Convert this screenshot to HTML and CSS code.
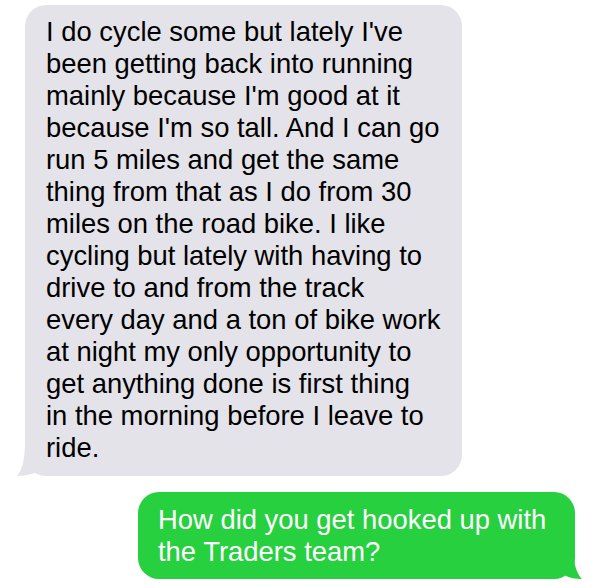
FILE: index.html
```html
<!DOCTYPE html>
<html>
<head>
<meta charset="utf-8">
<link rel="stylesheet" href="styles.css">
</head>
<body>
<div class="thread">
  <div class="bubble them">
    <p class="text">I do cycle some but lately I've
been getting back into running
mainly because I'm good at it
because I'm so tall. And I can go
run 5 miles and get the same
thing from that as I do from 30
miles on the road bike. I like
cycling but lately with having to
drive to and from the track
every day and a ton of bike work
at night my only opportunity to
get anything done is first thing
in the morning before I leave to
ride.</p>
    <svg class="tail tail-left" width="30" height="34" viewBox="0 0 30 34"><path d="M8 0 C8 18 5 28 0 34 C6 34 12 33 18 31 L30 20 L30 0 Z"/></svg>
  </div>
  <div class="bubble me">
    <p class="text">How did you get hooked up with
the Traders team?</p>
    <svg class="tail tail-right" width="30" height="24" viewBox="0 0 30 24"><path d="M22 0 C22 10 25 19 30 24 C24 24 18 23 12 20 L0 14 L0 0 Z"/></svg>
  </div>
</div>
</body>
</html>
```
FILE: styles.css
```css
html, body {
  margin: 0;
  padding: 0;
  background: #ffffff;
}
.thread {
  display: flex;
  flex-direction: column;
  gap: 16px;
  padding-top: 5px;
  font-family: "Liberation Sans", Arial, sans-serif;
}
.bubble {
  position: relative;
  border-radius: 21px;
  box-sizing: border-box;
}
.text {
  margin: 0;
  white-space: pre-line;
  font-size: 27.4px;
  line-height: 32px;
}
.them {
  align-self: flex-start;
  margin-left: 25px;
  width: 437px;
  background: #e4e3e9;
  color: #000;
  padding: 11px 4px 12px 21px;
}
.me {
  align-self: flex-start;
  margin-left: 138px;
  width: 437px;
  background: #27d03f;
  color: #fff;
  padding: 12px 4px 11px 20px;
}
.tail {
  position: absolute;
  bottom: 0;
}
.tail-left {
  left: -8px;
  fill: #e4e3e9;
}
.tail-right {
  right: -7px;
  fill: #27d03f;
}
```
